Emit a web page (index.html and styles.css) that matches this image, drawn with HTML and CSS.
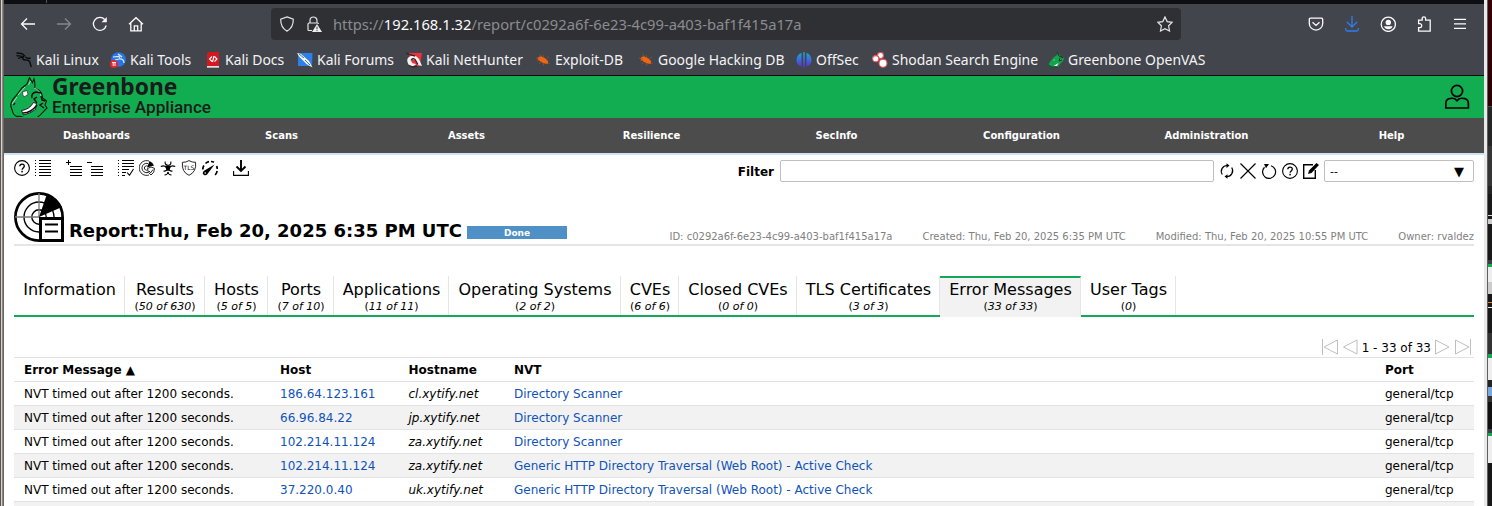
FILE: index.html
```html
<!DOCTYPE html>
<html lang="en">
<head>
<meta charset="utf-8">
<title>Greenbone Enterprise Appliance</title>
<link rel="stylesheet" href="styles.css">
</head>
<body>
<svg width="0" height="0" class="defs">
  <symbol id="help" viewBox="0 0 16 16"><circle cx="8" cy="8" r="7.4" fill="none" stroke="#000" stroke-width="1.1"/><path d="M5.800 6.300c0-3 4.500-2.900 4.500-.2 0 1.700-2.200 1.900-2.200 3.700" fill="none" stroke="#000" stroke-width="1.300"/><rect x="7.300" y="10.800" width="1.500" height="1.600"/></symbol>
  <symbol id="bug" viewBox="0 0 16 16"><path d="M3.500 5l2.500-.8 4.500 2.300 2.700 2.800-.7 2.700-3.700-.7-3.800-2L2.500 7z" fill="#f26611"/><path d="M1 6l4 1M5 2l1 3M8 3l1 3M12 6l2-1M2 9l3-1M4 12l2-2M13 11l2 1M8 11l1 3" stroke="#b05a24" stroke-width=".8" opacity=".7"/></symbol>
</svg>
<div class="screen">
<div class="window">
  <div class="tabstrip"><i></i></div>
  <div class="navbar">
    <div class="navbtns">
      <svg viewBox="0 0 16 16" class="nb"><path d="M15 8H1.500M7 2.500L1.500 8 7 13.500"/></svg>
      <svg viewBox="0 0 16 16" class="nb dim"><path d="M1 8h13.500M9 2.500L14.500 8 9 13.500"/></svg>
      <svg viewBox="0 0 16 16" class="nb"><path d="M14.200 9.500A6.500 6.500 0 1 1 12.700 3.500"/><path d="M14.800 1v5.200H9.600z" fill="#fbfbfe" stroke="none"/></svg>
      <svg viewBox="0 0 16 16" class="nb"><path d="M1 8.300L8 1.700l7 6.600M2.800 7v7.800h10.400V7M6.300 14.500v-4.700h3.400v4.700"/></svg>
    </div>
    <div class="urlbar">
      <svg viewBox="0 0 16 16" class="ub"><path d="M8 .9l6.300 2.200c.1 5-1.300 9.500-6.300 12C3 12.600 1.600 8.100 1.700 3.100z"/></svg>
      <svg viewBox="0 0 16 16" class="ub"><path d="M4 7V4.500a3.500 3.500 0 0 1 7 0V7M6 14.500H3q-1 0-1-1V8q0-1 1-1h8.500q1 0 1 1"/><path d="M11 8L16 16H6z" fill="#eee" stroke="none"/><path d="M11 10.700v2.600M11 14.200v1" stroke="#333" stroke-width="1"/></svg>
      <span class="url">https://<b>192.168.1.32</b>/report/c0292a6f-6e23-4c99-a403-baf1f415a17a</span>
      <svg viewBox="0 0 16 16" class="ub star"><path d="M8 .9l2.200 4.700 5 .7-3.600 3.500.9 5.200L8 12.600 3.500 15l.9-5.200L.8 6.300l5-.7z"/></svg>
    </div>
    <div class="tools">
      <svg viewBox="0 0 16 16" class="nb"><path d="M2.500 2.200h11q1.200 0 1.200 1.200v4a6.700 6.700 0 0 1-13.400 0v-4q0-1.200 1.200-1.200zM4.500 6.200L8 9.400l3.500-3.200"/></svg>
      <svg viewBox="0 0 16 16" class="nb blue"><path d="M8 0v10.500M3 6l5 5 5-5M1.700 12v1.500q0 1.500 1.500 1.500h9.600q1.500 0 1.500-1.500V12"/></svg>
      <svg viewBox="0 0 16 16" class="nb"><circle cx="8.300" cy="8.300" r="7.100"/><circle cx="8.300" cy="6.400" r="2.700" fill="#fbfbfe" stroke="none"/><path d="M4 10.300h8.600q-1 3-4.300 3T4 10.300z" fill="#fbfbfe" stroke="none"/></svg>
      <svg viewBox="0 0 16 16" class="nb"><path d="M2.600 4.200h3.600V2.500a1.600 1.600 0 0 1 3.400 0v1.700h4.600v11H2.600v-3.600h1.600a2 2 0 0 0 0-3.900H2.600z"/></svg>
      <svg viewBox="0 0 16 16" class="nb"><path d="M2 3.300h12M2 7.800h12M2 12.300h12"/></svg>
    </div>
  </div>
  <div class="bookmarks">
    <span class="bm b1"><svg viewBox="0 0 16 16"><path d="M.5 1l5.500.7 3 2.300M.5 3.700l6 .6M2 6.500l5-1.500M8 4q-3 3.500 1 4 5-.3 5 3l1.300 4M9 5l3.500 1.500 2-.5" fill="none" stroke="#08080a" stroke-width="1.300"/></svg>Kali Linux</span>
    <span class="bm b2"><svg viewBox="0 0 16 16"><circle cx="8.500" cy="7.500" r="7.300" fill="#2779e8"/><path d="M3 5l6-.5 1 1.500M5 8l4-1q5-.5 5 4M8 2l4 3" fill="none" stroke="#dceaff" stroke-width="1.200"/><circle cx="4" cy="12" r="4" fill="#e52530"/><path d="M2 10.500h4M3.200 10.500V14M5 10.500V14" stroke="#fff" stroke-width=".9"/></svg>Kali Tools</span>
    <span class="bm b3"><svg viewBox="0 0 16 16"><path d="M2 1.500L3.500 0H14v14H2z" fill="#d5181e"/><path d="M2 14h12v1.700H2z" fill="#e7dcdc"/><path d="M7 4.500L4.500 7 7 9.500M9.500 4.500L12 7 9.500 9.500M9 4L7.500 10" fill="none" stroke="#fff" stroke-width="1.100"/></svg>Kali Docs</span>
    <span class="bm b4"><svg viewBox="0 0 16 16"><path d="M1 1h14.500L15 14H1z" fill="#2d80ea"/><path d="M0 1l4 1 8 7 3.500 6.500-6-3.500-7-7z" fill="#f4f6fa"/><path d="M2 2l5 4M8 8l5 5" stroke="#263342" stroke-width=".7"/></svg>Kali Forums</span>
    <span class="bm b5"><svg viewBox="0 0 16 16"><path d="M3 1h13l-2 13H4z" fill="#ef2f3b"/><path d="M2.500 12.500Q-1 6 5 4q5-1.500 8 3l3 7-4-1-2-4Q8 6.500 6 8q-1.500 2 1 3.500 2-.5 3 1-4 3.500-7.500 0z" fill="#f4f1f1"/><path d="M0 1l5 2 4 1M5 8.500q1.500-3 4-1l3 5M3 13.500l4 1.500 4-1" fill="none" stroke="#2c2630" stroke-width="1.300"/></svg>Kali NetHunter</span>
    <span class="bm b6"><svg><use href="#bug"/></svg>Exploit-DB</span>
    <span class="bm b7"><svg><use href="#bug"/></svg>Google Hacking DB</span>
    <span class="bm b8"><svg viewBox="0 0 16 16"><defs><linearGradient id="g" x2="0" y2="1"><stop stop-color="#19a9dc"/><stop offset="1" stop-color="#622bd8"/></linearGradient></defs><path d="M5.500.8v14Q.5 13 .5 8T5.500.8zM10.500.8v14Q15.500 13 15.500 8T10.500.8zM7.200.3h1.600v15.400H7.200z" fill="url(#g)"/></svg>OffSec</span>
    <span class="bm b9"><svg viewBox="0 0 16 16"><g fill="#fff" stroke="#df555b" stroke-width="1.100"><circle cx="8.500" cy="3.500" r="3"/><circle cx="3.700" cy="6.700" r="3.100"/><circle cx="11" cy="11.200" r="4"/></g></svg>Shodan Search Engine</span>
    <span class="bm b10"><svg viewBox="0 0 16 16"><path d="M6 5l3-2 .5-3L11 3l1-1 .5 3L16 6l-1 3-3 3-2 3-5 .5-4-1L.5 12 3 8.500z" fill="#12a34c"/><path d="M9 0l2 4 4 2M.5 13l3 2 6 0M12 6l-1 3 3-1" stroke="#173624" fill="none"/><path d="M5.500 14l5-3-1.500 3z" fill="#fff"/><path d="M5 8l1.500-.5v1z" fill="#fff"/></svg>Greenbone OpenVAS</span>
  </div>

  <header class="brand">
    <svg class="dragon" viewBox="0 0 38 40">
      <path d="M1 30Q0 25 5 20l7-9 5-4L19.500.7l3 5L24 2q1.500 5 .5 9l4 2q4 3 4 8l4 3-1.500 4 2 3-4 4q-4 5-9 7l-8 .5q-4-4-9-3-4-1-5-7z" fill="#12ad50" stroke="#07150b" stroke-width="1.100"/>
      <path d="M18.500 8l2-4M24 11q6 2 7 8M8 18l7-8M2 27l5-7" stroke="#c9eed7" stroke-width=".8" fill="none"/>
      <path d="M12.500 15l4.500-1.500 1 4-4 2.500q-1.500-2-1.500-5z" fill="#fff" stroke="#111" stroke-width=".6"/>
      <path d="M11.500 33.500q8-1 12-8l3 1-1 6-6 3.500-6 2z" fill="#fff" stroke="#111" stroke-width=".9"/>
      <path d="M3.500 28l1.500-2M22 21q-1-5 4-6l5 1M27 26l-3-4 3-2M31 19l1 4 3 1M33 26l-3 2 4 3M13 36q8 0 14-8" fill="none" stroke="#111" stroke-width="1.400"/>
    </svg>
    <div class="wordmark"><span class="w1">Greenbone</span><span class="w2">Enterprise Appliance</span></div>
    <svg class="user" viewBox="0 0 26 26"><g fill="none" stroke="#000" stroke-width="1.700"><circle cx="13" cy="7" r="5.600"/><path d="M1.800 24v-4.500q0-5 5-5.200 3-.2 4.200.6l2 2 2-2q1.200-.8 4.200-.6 5.200.2 5.200 5.200V24z"/></g></svg>
  </header>
  <nav class="menu"><span>Dashboards</span><span>Scans</span><span>Assets</span><span>Resilience</span><span>SecInfo</span><span>Configuration</span><span>Administration</span><span>Help</span></nav>

  <main>
    <div class="toolbar">
      <div class="icons">
        <svg><use href="#help"/></svg>
        <svg class="crisp" viewBox="0 0 16 16"><path d="M0 0h1v1H0zM0 3h1v1H0zM0 6h1v1H0zM0 9h1v1H0zM0 12h1v1H0zM0 15h1v1H0zM4 0h12v1H4zM4 3h12v1H4zM4 6h12v1H4zM4 9h12v1H4zM4 12h12v1H4zM4 15h12v1H4z"/></svg>
        <svg class="crisp gap" viewBox="0 0 16 16"><path d="M2 0h1v5H2zM0 2h5v1H0zM4 6h12v1H4zM4 9h12v1H4zM4 12h12v1H4zM4 15h12v1H4z"/></svg>
        <svg class="crisp" viewBox="0 0 16 16"><path d="M0 2h5v1H0zM4 6h12v1H4zM4 9h12v1H4zM4 12h12v1H4zM4 15h12v1H4z"/></svg>
        <svg class="gap" viewBox="0 0 16 16"><path class="cr" d="M0 0h1v1H0zM0 3h1v1H0zM0 6h1v1H0zM0 9h1v1H0zM0 12h1v1H0zM0 15h1v1H0zM4 0h12v1H4zM4 3h12v1H4zM4 6h12v1H4zM4 9h7v1H4zM4 12h4v1H4zM4 15h3v1H4z"/><path d="M9 12.500l2.500 2.700L15.500 9" class="ln"/></svg>
        <svg viewBox="0 0 16 16"><g class="ln thin"><path d="M10 1A7.400 7.400 0 1 0 10 15"/><path d="M9 3.500a4.700 4.700 0 1 0 0 9M8.500 6a2.200 2.200 0 1 0 0 4"/></g><path d="M8 7.500L10.500 1q3 1 4.500 4.500z"/><path d="M8.500 8.500L12 7l3.500 1.300q.2 4.500-3.500 6.700-3.500-2.300-3.500-6.500z" fill="#fff" class="ln thin wh"/><path d="M10 11l1.700 1.800L14 9.500" class="ln thin"/></svg>
        <svg viewBox="0 0 16 16"><path d="M5.200 1.500Q4.500 5 8 5.200T10.800 1.500M.8 6.500Q5 4.500 7 8.500M15.200 6.500Q11 4.500 9 8.500M3.500 11q3 .5 4-2.500M12.500 11q-3 .5-4-2.500M4.500 15q3 0 3.500-3 .5 3 3.500 3" class="ln"/><path d="M5.500 5.500h5L10 9l-2 2.500L6 9z"/></svg>
        <svg viewBox="0 0 16 16"><path d="M8 .6Q11 2.500 14.600 2.300q1 9.700-6.600 13Q.4 12 1.400 2.300 5 2.500 8 .6z" class="ln thin"/><text x="8" y="9.500" text-anchor="middle" class="tls">TLS</text></svg>
        <svg viewBox="0 0 16 16"><path d="M.8 9.500q0-2.500 1.200-4M3.500 3.500Q5 2 7 1.700M9 1.500q1.800 0 3 .7M14.500 6q.8 1.500.8 3M15.200 11q-.4 2.200-2 4" fill="none" stroke="#000" stroke-width="1.700"/><path d="M12.500 4.500L5.500 14q-1.500 2-3.500 1t-1-3q.5-1 1.500-1.500z"/><circle cx="3.200" cy="13" r=".8" fill="#fff"/></svg>
        <svg class="gap" viewBox="0 0 16 16"><path d="M8 0v10M3.500 6.500L8 11l4.500-4.500" fill="none" stroke="#000" stroke-width="1.900"/><path d="M.6 11v4.400h14.800V11" class="ln"/></svg>
      </div>
      <div class="filter">
        <label>Filter</label><div class="input"></div>
        <svg viewBox="0 0 16 16"><path d="M3.300 11.500A5.800 5.800 0 0 1 8.500 2.500M12.700 4.500A5.800 5.800 0 0 1 7.500 13.500" class="ln mid"/><path d="M7.500.300l3 2.300-3 2.300zM8.500 11.200l-3 2.300 3 2.300z"/></svg>
        <svg viewBox="0 0 16 16"><path d="M.5.500l15 15M15.500.500l-15 15" class="ln mid"/></svg>
        <svg viewBox="0 0 16 16"><path d="M3.500 4.300A6.500 6.500 0 1 0 10 2.700" class="ln mid"/><path d="M3 1h5L5 5.200z"/></svg>
        <svg><use href="#help"/></svg>
        <svg viewBox="0 0 16 16"><path d="M10 1.700H.7v13.600h11.600V7" class="ln thick"/><path d="M13.500 0L16 2 8.500 10 5 11l1-3.500z"/></svg>
        <div class="select"><span>--</span><span class="tri">▼</span></div>
      </div>
    </div>

    <section class="title">
      <svg viewBox="0 0 50 50" class="radar"><g fill="none" stroke="#000"><circle cx="25" cy="25" r="23.600" stroke-width="2.700"/><circle cx="25" cy="25" r="15" stroke-width="1.400"/><circle cx="25" cy="25" r="7.200" stroke-width="1.400"/><path d="M1 25h24M25 1v24" stroke="#777" stroke-width="1.300"/></g><path d="M25 25L33 2q9 3 15 13z"/><path d="M26.500 26.500h22v22h-22z" fill="#fff" stroke="#000" stroke-width="3"/><path d="M31 32.500h13M31 39.500h13" stroke="#000" stroke-width="2.200"/></svg>
      <h1>Report:Thu, Feb 20, 2025 6:35 PM UTC</h1>
      <div class="done">Done</div>
      <div class="meta"><span>ID: c0292a6f-6e23-4c99-a403-baf1f415a17a</span><span>Created: Thu, Feb 20, 2025 6:35 PM UTC</span><span>Modified: Thu, Feb 20, 2025 10:55 PM UTC</span><span>Owner: rvaldez</span></div>
    </section>

    <div class="tabs">
      <div class="tab">Information</div>
      <div class="tab">Results<small>(<i>50 of 630</i>)</small></div>
      <div class="tab">Hosts<small>(<i>5 of 5</i>)</small></div>
      <div class="tab">Ports<small>(<i>7 of 10</i>)</small></div>
      <div class="tab">Applications<small>(<i>11 of 11</i>)</small></div>
      <div class="tab">Operating Systems<small>(<i>2 of 2</i>)</small></div>
      <div class="tab">CVEs<small>(<i>6 of 6</i>)</small></div>
      <div class="tab">Closed CVEs<small>(<i>0 of 0</i>)</small></div>
      <div class="tab">TLS Certificates<small>(<i>3 of 3</i>)</small></div>
      <div class="tab active">Error Messages<small>(<i>33 of 33</i>)</small></div>
      <div class="tab">User Tags<small>(<i>0</i>)</small></div>
    </div>

    <div class="pager">
      <svg viewBox="0 0 16 16"><path d="M.5 0v16M15.500 1v14L2 8z"/></svg>
      <svg viewBox="0 0 16 16"><path d="M15 1v14L1.500 8z"/></svg>
      <span>1 - 33 of 33</span>
      <svg viewBox="0 0 16 16"><path d="M.5 1v14L14 8z"/></svg>
      <svg viewBox="0 0 16 16"><path d="M15.500 0v16M.5 1v14L14 8z"/></svg>
    </div>

    <table>
      <thead><tr><th class="c1">Error Message <span class="sort">▲</span></th><th class="c2">Host</th><th class="c3">Hostname</th><th class="c4">NVT</th><th>Port</th></tr></thead>
      <tbody>
        <tr><td>NVT timed out after 1200 seconds.</td><td><a>186.64.123.161</a></td><td><i>cl.xytify.net</i></td><td><a>Directory Scanner</a></td><td>general/tcp</td></tr>
        <tr><td>NVT timed out after 1200 seconds.</td><td><a>66.96.84.22</a></td><td><i>jp.xytify.net</i></td><td><a>Directory Scanner</a></td><td>general/tcp</td></tr>
        <tr><td>NVT timed out after 1200 seconds.</td><td><a>102.214.11.124</a></td><td><i>za.xytify.net</i></td><td><a>Directory Scanner</a></td><td>general/tcp</td></tr>
        <tr><td>NVT timed out after 1200 seconds.</td><td><a>102.214.11.124</a></td><td><i>za.xytify.net</i></td><td><a>Generic HTTP Directory Traversal (Web Root) - Active Check</a></td><td>general/tcp</td></tr>
        <tr><td>NVT timed out after 1200 seconds.</td><td><a>37.220.0.40</a></td><td><i>uk.xytify.net</i></td><td><a>Generic HTTP Directory Traversal (Web Root) - Active Check</a></td><td>general/tcp</td></tr>
        <tr><td></td><td></td><td></td><td></td><td></td></tr>
      </tbody>
    </table>
  </main>
</div>
<div class="behind"></div>
</div>
</body>
</html>
```

FILE: styles.css
```css
* { box-sizing: border-box; }
body { margin: 0; width: 1492px; height: 506px; overflow: hidden; font-family: "DejaVu Sans", sans-serif; font-size: 12px; color: #000; background: #fff; }
svg { display: block; flex: none; }
.defs { display: none; }
.screen { display: flex; height: 506px; overflow: hidden; background: linear-gradient(90deg, #5a5550 0 1px, #d6d2ce 1px 2px, #8c8783 2px 3px, #6a6561 3px 4px, #fff 4px); padding-left: 4px; }
.window { width: 1480px; height: 506px; overflow: hidden; flex: none; }

/* browser chrome */
.tabstrip { height: 4px; background: #0e0f12; padding-left: 42px; }
.tabstrip i { display: block; width: 1px; height: 3px; background: #55565c; }
.navbar { height: 40px; background: #43454c; display: flex; align-items: center; }
.navbtns { display: flex; gap: 20px; padding-left: 16px; width: 267px; }
.nb, .ub { width: 16px; height: 16px; fill: none; stroke: #fbfbfe; stroke-width: 1.3; }
.ub { stroke: #e4e4e8; stroke-width: 1.2; }
.dim { stroke: #85868b; }
.blue { stroke: #2f7cf0; }
.urlbar { width: 910px; height: 32px; background: #2f3034; border-radius: 4px; display: flex; align-items: center; padding: 0 8px; gap: 11px; }
.url { font: 14.74px "Noto Sans", sans-serif; color: #8b8c90; white-space: nowrap; flex: 1; }
.url b { font-weight: 400; color: #fbfbfe; }
.tools { display: flex; gap: 20px; padding-left: 127px; }
.bookmarks { height: 32px; background: #43454c; border-bottom: 1px solid #0b0b0d; display: flex; padding-left: 12px; }
.bm { display: flex; align-items: center; gap: 4px; height: 30px; font: 13.95px "Noto Sans", sans-serif; color: #f4f4f6; white-space: nowrap; flex: none; }
.bm svg { width: 16px; height: 16px; margin-top: 1px; }
.b1 { width: 94px; } .b2 { width: 95px; } .b3 { width: 92px; } .b4 { width: 109px; } .b5 { width: 129px; }
.b6 { width: 103px; } .b7 { width: 158px; } .b8 { width: 76px; } .b9 { width: 176px; }

/* application header */
.brand { height: 42px; background: #12ad50; display: flex; padding: 0 14px 0 6px; }
.dragon { width: 38px; height: 40px; margin-top: 1px; }
.wordmark { display: flex; flex-direction: column; margin-left: 4px; flex: 1; color: #1a1b1b; white-space: nowrap; }
.w1 { font: 700 22.8px/21px "Noto Sans", sans-serif; }
.w2 { font: 500 17.2px/20px Roboto, sans-serif; }
.user { width: 26px; height: 26px; margin-top: 8px; }
.menu { height: 35px; background: #4c4c4c; display: flex; color: #fff; font-weight: 700; font-size: 10px; line-height: 35px; text-align: center; }
.menu span { width: 185px; }
main { border-top: 2px solid #d1e2f8; padding: 5px 10px 0; height: 353px; background: #fff; }
.toolbar { display: flex; justify-content: space-between; height: 22px; }
.icons { display: flex; gap: 5px; }
.icons svg, .filter svg { width: 16px; height: 16px; }
.gap { margin-left: 10px; }
.crisp, .cr { shape-rendering: crispEdges; }
.ln { fill: none; stroke: #000; stroke-width: 1.1; }
.thin { stroke-width: .85; }
.wh { fill: #fff; }
.mid { stroke-width: 1.2; }
.thick { stroke-width: 1.4; }
.tls { font: 6px "DejaVu Sans", sans-serif; }
.filter { display: flex; align-items: center; gap: 5px; }
.filter label { font-weight: 700; padding-top: 2px; margin-right: 1px; }
.input, .select { border: 1px solid #bfbfbf; border-radius: 2px; height: 22px; }
.input { width: 434px; }
.select { width: 150px; display: flex; justify-content: space-between; align-items: center; padding: 1px 9px 0 5px; font-size: 11px; }
.tri { font-size: 13px; }

/* report title */
.title { margin-top: 10px; height: 54px; border-bottom: 2px solid #e5e5e5; display: flex; align-items: flex-start; }
.radar { width: 50px; height: 50px; }
h1 { margin: 27px 0 0 5px; font-size: 18px; line-height: 24px; white-space: nowrap; width: 398px; }
.done { width: 100px; height: 13px; margin-top: 34px; background: #4f91c7; color: #fff; font-weight: 700; font-size: 9px; line-height: 14px; text-align: center; }
.meta { flex: 1; display: flex; justify-content: flex-end; gap: 30px; margin-top: 38px; font-size: 10px; line-height: 13px; color: #7f7f7f; white-space: nowrap; }

/* tabs */
.tabs { display: flex; margin-top: 30px; height: 41px; border-bottom: 2px solid #12a858; }
.tab { height: 39px; border-right: 1px solid #e5e5e5; padding: 4px 0 0 1px; text-align: center; font-size: 16px; line-height: 19px; white-space: nowrap; flex: none; }
.tab small { display: block; font-size: 11px; line-height: 16px; }
.tab:nth-child(1) { width: 111px; } .tab:nth-child(2) { width: 80px; } .tab:nth-child(3) { width: 63px; }
.tab:nth-child(4) { width: 66px; } .tab:nth-child(5) { width: 115px; } .tab:nth-child(6) { width: 172px; }
.tab:nth-child(7) { width: 58px; } .tab:nth-child(8) { width: 118px; } .tab:nth-child(9) { width: 143px; }
.tab:nth-child(10) { width: 141px; } .tab:nth-child(11) { width: 95px; }
.tab.active { height: 41px; background: #f2f2f2; border-top: 2px solid #12a858; padding-top: 2px; }

.pager { display: flex; justify-content: flex-end; align-items: center; gap: 4px; margin-top: 22px; height: 16px; padding-right: 3px; }
.pager span { padding-top: 2px; }
.pager svg { width: 16px; height: 16px; fill: none; stroke: #bfbfbf; }

table { width: 1460px; margin-top: 2px; border-collapse: separate; border-spacing: 0; border-top: 1px solid #e2e2e2; table-layout: fixed; }
th, td { height: 24px; padding: 2px 0 0 10px; text-align: left; border-bottom: 1px solid #e2e2e2; white-space: nowrap; line-height: 15px; }
.c1 { width: 256px; } .c2 { width: 128.5px; } .c3 { width: 105.5px; } .c4 { width: 871px; }
tbody tr:nth-child(even) { background: #f2f2f2; }
a { color: #1152b8; }

/* window edge and desktop sliver */
.behind { width: 8px; flex: none; border-left: 3px solid #e9e9e9; background: linear-gradient(90deg, #606060 0 1px, transparent 1px),
  linear-gradient(180deg, #3a0007 0, #2a0004 106px, #4a4a4a 106px 107px, #252525 107px 146px, #353535 146px 186px, #242424 186px 194px, #191919 194px 215px, #ddd 215px 216px, #191916 216px 219px, #ccc 219px 224px, #191919 224px 260px, #3b3e44 260px 264px, #12ad50 264px 267px, #eee 267px 282px, #ccc 282px 294px, #171717 294px 302px, #e08430 302px 303px, #171717 303px 307px, #eee 307px 308px, #191919 308px 333px, #333 333px 354px, #12a858 354px 358px, #eee 358px 380px, #242424 380px 387px, #78a8e0 387px 396px, #333 396px 402px, #111 402px 429px, #3b3e44 429px 433px, #12a858 433px 436px, #eee 436px 463px, #171717 463px); }
```
